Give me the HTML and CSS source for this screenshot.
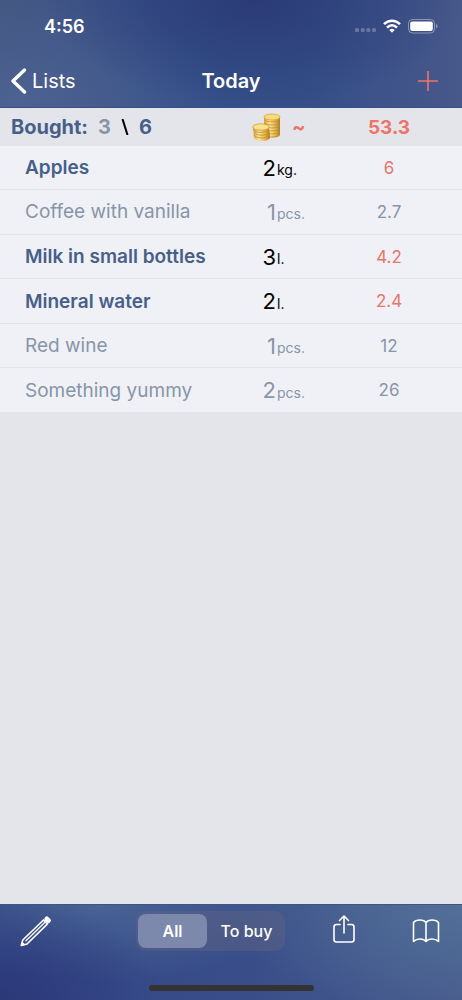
FILE: index.html
```html
<!DOCTYPE html>
<html lang="en">
<head>
  <meta charset="UTF-8" />
  <meta name="viewport" content="width=device-width, initial-scale=1.0"/>
  <title>Today</title>
  <link rel="stylesheet" href="styles.css">
</head>
<body>
  <header class="header">
    <div class="statusbar">
      <span class="time">4:56</span>
      <div class="status-icons">
        <svg width="22" height="6" viewBox="0 0 22 6" fill="#fff" opacity="0.25">
          <rect x="0" y="1" width="4" height="4" rx="1.5"/><rect x="5.700" y="1" width="4" height="4" rx="1.5"/><rect x="11.300" y="1" width="4" height="4" rx="1.5"/><rect x="17" y="1" width="4" height="4" rx="1.5"/>
        </svg>
        <svg class="wifi" width="18" height="14" viewBox="0 0 18 14" fill="none" stroke="#fff" stroke-width="2.500">
          <path d="M1 5.200C5.600 .600 12.400 .600 17 5.200"/>
          <path d="M4 8.600C6.900 5.600 11.100 5.600 14 8.600"/>
          <path d="M6.300 11Q9 8.600 11.700 11L9 13.700Z" fill="#fff" stroke="none"/>
        </svg>
        <svg class="battery" width="30" height="15" viewBox="0 0 30 15">
          <rect x="0.500" y="0.500" width="26" height="13.500" rx="4" fill="none" stroke="#fff" stroke-opacity="0.4"/>
          <rect x="2.200" y="2.500" width="22.600" height="9.500" rx="2" fill="#fff"/>
          <path d="M28 5Q29.600 5.500 29.600 7.200T28 9.500Z" fill="#fff" fill-opacity="0.4"/>
        </svg>
      </div>
    </div>
    <nav class="navbar">
      <a class="back" href="#lists">
        <svg width="16" height="26" viewBox="0 0 16 26" fill="none" stroke="#fff" stroke-width="3.400" stroke-linecap="round" stroke-linejoin="round"><path d="M13.500 2L2 13L13.500 24"/></svg>
        Lists
      </a>
      <h1>Today</h1>
      <button class="add" type="button" aria-label="Add item">
        <svg width="22" height="22" viewBox="0 0 22 22" stroke="#ed7467" stroke-width="1.600"><path d="M11 1V21M1 11H21"/></svg>
      </button>
    </nav>
  </header>

  <main class="content">
    <table class="list">
      <colgroup>
        <col>
        <col class="col-amount">
        <col class="col-unit">
        <col class="col-price">
      </colgroup>
      <thead>
        <tr>
          <th class="bought">
            <div class="counts">
              <span>Bought:</span>
              <span class="done">3</span>
              <svg width="8" height="16" viewBox="0 0 8 16" stroke="#000" stroke-width="2"><path d="M1.500 0L6.500 16"/></svg>
              <span>6</span>
            </div>
          </th>
          <th colspan="2">
            <div class="coins">
              <svg width="30" height="28" viewBox="0 0 30 28">
                <defs>
                  <linearGradient id="gold" x1="0" x2="1" y1="0" y2="0">
                    <stop offset="0" stop-color="#dba23b"/>
                    <stop offset="0.350" stop-color="#fbe596"/>
                    <stop offset="0.700" stop-color="#e6b646"/>
                    <stop offset="1" stop-color="#b27a20"/>
                  </linearGradient>
                </defs>
                <path d="M12 4V22Q14 25 20 25T28 22V4Z" fill="url(#gold)"/>
                <g fill="none" stroke="#b98a30" stroke-width="0.700">
                  <path d="M12 6.500Q14 9 20 9T28 6.500"/>
                  <path d="M12 9.500Q14 12 20 12T28 9.500"/>
                  <path d="M12 12.500Q14 15 20 15T28 12.500"/>
                  <path d="M12 15.500Q14 18 20 18T28 15.500"/>
                  <path d="M12 18.500Q14 21 20 21T28 18.500"/>
                  <path d="M12 21.500Q14 24 20 24T28 21.500"/>
                </g>
                <ellipse cx="20" cy="4" rx="8" ry="3" fill="#f9db7b" stroke="#d9a23c" stroke-width="0.800"/>
                <path d="M1 14L2 25Q4 28 10 28T18 25L17 14Z" fill="url(#gold)"/>
                <g fill="none" stroke="#b98a30" stroke-width="0.700">
                  <path d="M1 16.500Q3 19.500 9 19.500T17 16.500"/>
                  <path d="M2 19.500Q4 22.300 10 22.300T18 19.500"/>
                  <path d="M1.500 22Q4 25 10 25T18 22"/>
                </g>
                <ellipse cx="9" cy="14" rx="8.200" ry="3.200" fill="#fae28a" stroke="#d49b36" stroke-width="0.800"/>
              </svg>
              <span>~</span>
            </div>
          </th>
          <th class="total">53.3</th>
        </tr>
      </thead>
      <tbody>
        <tr>
          <td class="name">Apples</td>
          <td class="amount">2</td>
          <td class="unit">kg.</td>
          <td class="price">6</td>
        </tr>
        <tr class="crossed">
          <td class="name">Coffee with vanilla</td>
          <td class="amount">1</td>
          <td class="unit">pcs.</td>
          <td class="price">2.7</td>
        </tr>
        <tr>
          <td class="name">Milk in small bottles</td>
          <td class="amount">3</td>
          <td class="unit">l.</td>
          <td class="price">4.2</td>
        </tr>
        <tr>
          <td class="name">Mineral water</td>
          <td class="amount">2</td>
          <td class="unit">l.</td>
          <td class="price">2.4</td>
        </tr>
        <tr class="crossed">
          <td class="name">Red wine</td>
          <td class="amount">1</td>
          <td class="unit">pcs.</td>
          <td class="price">12</td>
        </tr>
        <tr class="crossed">
          <td class="name">Something yummy</td>
          <td class="amount">2</td>
          <td class="unit">pcs.</td>
          <td class="price">26</td>
        </tr>
      </tbody>
    </table>
  </main>

  <footer class="toolbar">
    <div class="tools">
      <button class="edit" type="button" aria-label="Edit">
        <svg width="32" height="32" viewBox="0 0 32 32" fill="none" stroke="#fff" stroke-linejoin="round">
          <path d="M23.500 5L2.800 25L1.300 30.500L7 29L27.500 8.800Z" stroke-width="1.700"/>
          <path d="M25 7.200L5.500 26.300" stroke-width="1.300"/>
          <path d="M1 31L2.300 26.800L5.500 29.700Z" fill="#fff" stroke="none"/>
          <path d="M26.800 3.900L28.400 5.500" stroke-width="5" stroke-linecap="round"/>
        </svg>
      </button>
      <div class="segmented">
        <button class="segment active" type="button" aria-pressed="true">All</button>
        <button class="segment" type="button" aria-pressed="false">To buy</button>
      </div>
      <div class="actions">
        <button type="button" aria-label="Share">
          <svg width="22" height="28" viewBox="0 0 22 28" fill="none" stroke="#fff" stroke-width="1.600" stroke-linecap="round" stroke-linejoin="round">
            <path d="M7 9.500H3.500Q1 9.500 1 12V24.500Q1 27 3.500 27H18.500Q21 27 21 24.500V12Q21 9.500 18.500 9.500H15M11 18V1.500M6.500 5.500L11 1L15.500 5.500"/>
          </svg>
        </button>
        <button class="book" type="button" aria-label="Catalog">
          <svg width="28" height="24" viewBox="0 0 28 24" fill="none" stroke="#fff" stroke-width="1.600" stroke-linecap="round" stroke-linejoin="round">
            <path d="M14 3.500Q12 1 8 1Q3.500 1 1.500 3.500V22.500Q4 20 8 20Q12 20 14 22.500Q16 20 20 20Q24 20 26.500 22.500V3.500Q24.500 1 20 1Q16 1 14 3.500V22"/>
          </svg>
        </button>
      </div>
    </div>
    <div class="home-indicator"></div>
  </footer>
</body>
</html>
```
FILE: styles.css
```css
:root {
  --background: #e4e5eb;
  --row: #f0f1f6;
  --text: #46608a;
  --muted: #8895a7;
  --accent: #ed7467;
}
* { margin: 0; padding: 0; box-sizing: border-box; }
body {
  font-family: Inter, "Liberation Sans", sans-serif;
  background: var(--background);
  color: var(--text);
  display: flex;
  flex-direction: column;
  min-height: 100vh;
}
button {
  background: none;
  border: none;
  font-family: inherit;
  color: white;
  cursor: pointer;
}
svg { display: block; }
.header {
  height: 108px;
  background:
    radial-gradient(ellipse 45% 100% at 55% 0%, #2b3b78, rgba(43, 59, 120, 0)),
    radial-gradient(ellipse 45% 130% at 4% 100%, #4c6292, rgba(76, 98, 146, 0)),
    linear-gradient(90deg, #42547f, #34508a 40%, #344e88 65%, #47588a);
  border-bottom: 1px solid #3b5088;
  color: white;
}
.statusbar {
  display: flex;
  justify-content: space-between;
  align-items: center;
  height: 52px;
  padding: 0 24px 0 44px;
}
.time {
  font-size: 18px;
  font-weight: 600;
}
.status-icons {
  display: flex;
  align-items: center;
}
.status-icons svg:first-child { margin-top: 8px; }
.wifi { margin-left: 6px; }
.battery { margin-left: 7px; }
.navbar {
  display: grid;
  grid-template-columns: 1fr auto 1fr;
  align-items: center;
  height: 58px;
  padding: 0 23px 0 11px;
}
.back {
  display: flex;
  align-items: center;
  gap: 5px;
  color: white;
  font-size: 20px;
  text-decoration: none;
}
.navbar h1 {
  font-size: 20px;
  font-weight: 600;
  padding-left: 12px;
}
.add { justify-self: end; }
.content { flex-grow: 1; }
.list {
  width: 100%;
  height: 305px;
  table-layout: fixed;
  border-collapse: collapse;
}
.col-amount { width: 36px; }
.col-unit { width: 40px; }
.col-price { width: 146px; }
.list thead tr { height: 38px; }
.list th {
  font-size: 20px;
  font-weight: 700;
}
.counts {
  display: flex;
  align-items: center;
  gap: 10px;
  padding-left: 11px;
}
.done { color: var(--muted); }
.coins {
  display: flex;
  align-items: center;
  gap: 10px;
  padding-left: 12px;
  color: var(--accent);
}
.list .total {
  color: var(--accent);
  font-size: 19px;
}
.list tbody tr {
  background: var(--row);
  border-bottom: 1px solid var(--background);
}
.name {
  padding-left: 25px;
  font-size: 19px;
  font-weight: 600;
  white-space: nowrap;
}
.amount {
  color: black;
  font-size: 22px;
  text-align: right;
}
.unit {
  color: black;
  font-size: 14px;
  padding: 4px 0 0 1px;
}
.price {
  color: var(--accent);
  font-size: 17px;
  text-align: center;
}
.crossed td { color: var(--muted); }
.crossed .name { font-weight: 400; }
.toolbar {
  height: 96px;
  background:
    radial-gradient(ellipse 35% 110% at 0% 100%, #2b3878, rgba(43, 56, 120, 0)),
    radial-gradient(ellipse 45% 80% at 22% 0%, #486394, rgba(72, 99, 148, 0)),
    radial-gradient(ellipse 50% 120% at 100% 0%, #527099, rgba(82, 112, 153, 0)),
    linear-gradient(90deg, #35478a, #384d89 50%, #485b8c);
  border-top: 1px solid #3f5680;
  display: flex;
  flex-direction: column;
  justify-content: space-between;
  align-items: center;
  padding: 6px 0 9px;
}
.tools {
  display: flex;
  align-items: center;
  width: 100%;
  padding: 0 22px 0 20px;
}
.segmented {
  display: flex;
  gap: 3px;
  height: 40px;
  margin-left: 84px;
  padding: 3px 2px;
  border-radius: 10px;
  background: rgba(100, 100, 130, 0.4);
}
.segment {
  width: 73px;
  border-radius: 8px;
  font-size: 16px;
  font-weight: 500;
}
.segment.active {
  width: 69px;
  background: #7c88ac;
  font-weight: 600;
}
.actions {
  display: flex;
  align-items: center;
  gap: 57px;
  margin-left: auto;
  padding-bottom: 5px;
}
.book { padding-top: 5px; }
.home-indicator {
  width: 165px;
  height: 6px;
  border-radius: 3px;
  background: #333;
}
```
